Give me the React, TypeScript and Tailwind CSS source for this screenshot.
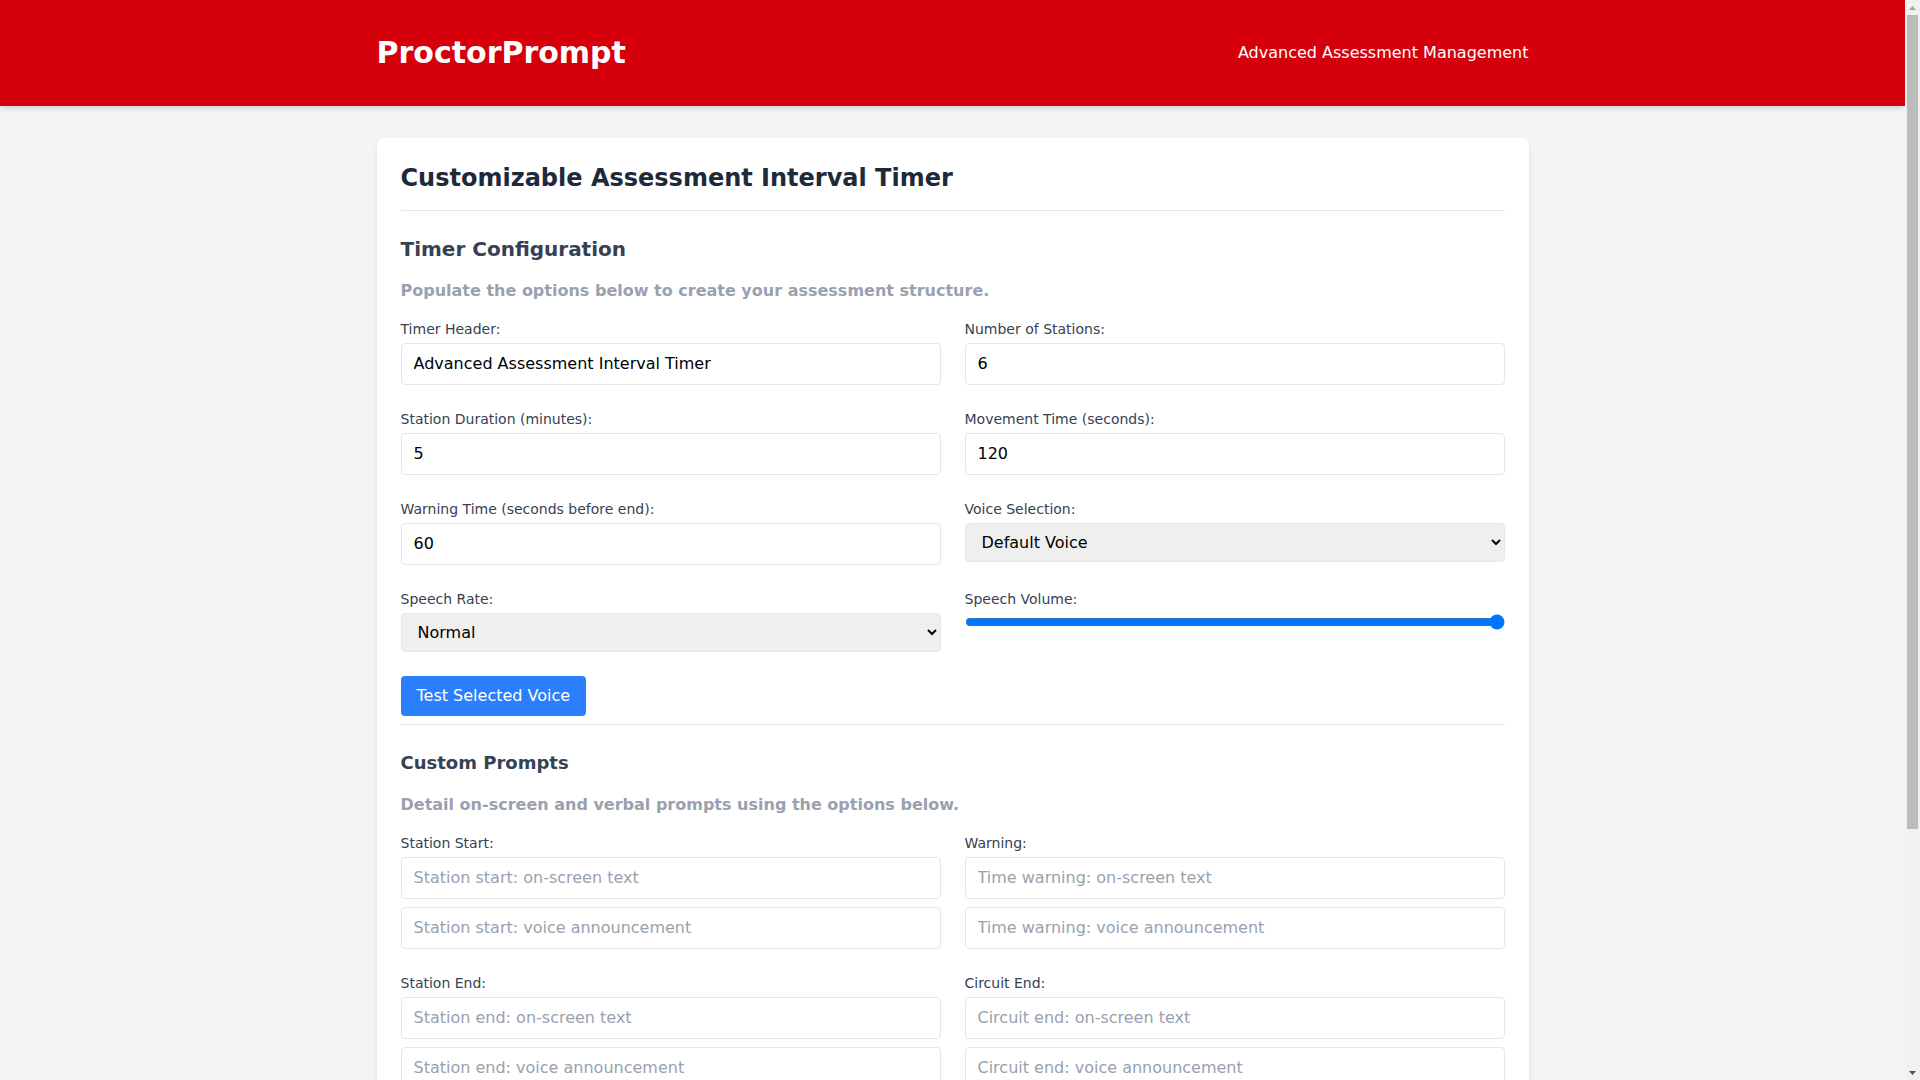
import { useState } from 'react'

const inputCls =
  'w-full px-3 py-2 border border-gray-200 rounded bg-white text-base text-black placeholder:text-gray-400 focus:outline-none focus:ring-2 focus:ring-blue-400'
const selectCls =
  'w-full h-[39px] px-3 border border-gray-200 rounded bg-[#efefef] text-base text-black focus:outline-none'
const labelCls = 'block text-sm text-gray-700 mb-1'

export default function App() {
  // timer config
  const [header, setHeader] = useState('Advanced Assessment Interval Timer')
  const [stations, setStations] = useState('6')
  const [duration, setDuration] = useState('5')
  const [movement, setMovement] = useState('120')
  const [warning, setWarning] = useState('60')
  const [voice, setVoice] = useState('default')
  const [rate, setRate] = useState('1')
  const [volume, setVolume] = useState('1')

  const prompts = [
    { label: 'Station Start:', a: 'Station start: on-screen text', b: 'Station start: voice announcement' },
    { label: 'Warning:', a: 'Time warning: on-screen text', b: 'Time warning: voice announcement' },
    { label: 'Station End:', a: 'Station end: on-screen text', b: 'Station end: voice announcement' },
    { label: 'Circuit End:', a: 'Circuit end: on-screen text', b: 'Circuit end: voice announcement' },
  ]

  return (
    <div className="h-screen flex bg-gray-100 font-['DejaVu_Sans',sans-serif]">
      <div className="flex-1 h-full overflow-y-auto [scrollbar-width:none]">
        {/* HEADER */}
        <header className="bg-[#d5000c] text-white shadow-md">
          <div className="max-w-6xl mx-auto h-[106px] flex items-center justify-between">
            <h1 className="text-3xl font-bold">ProctorPrompt</h1>
            <div className="text-base">Advanced Assessment Management</div>
          </div>
        </header>

        <main className="max-w-6xl mx-auto mt-8 pb-10">
          <div className="bg-white rounded-lg shadow-md p-6">
            <h2 className="text-2xl font-bold text-gray-800 pb-4 border-b border-gray-200 mb-6">
              Customizable Assessment Interval Timer
            </h2>

            {/* TIMER CONFIG */}
            <h3 className="text-xl font-bold text-gray-700 mb-4">Timer Configuration</h3>
            <p className="font-bold text-gray-400 mb-4">
              Populate the options below to create your assessment structure.
            </p>

            <div className="grid grid-cols-2 gap-6">
              <div>
                <label className={labelCls}>Timer Header:</label>
                <input className={inputCls} value={header} onChange={(e) => setHeader(e.target.value)} />
              </div>
              <div>
                <label className={labelCls}>Number of Stations:</label>
                <input className={inputCls} type="text" value={stations} onChange={(e) => setStations(e.target.value)} />
              </div>
              <div>
                <label className={labelCls}>Station Duration (minutes):</label>
                <input className={inputCls} type="text" value={duration} onChange={(e) => setDuration(e.target.value)} />
              </div>
              <div>
                <label className={labelCls}>Movement Time (seconds):</label>
                <input className={inputCls} type="text" value={movement} onChange={(e) => setMovement(e.target.value)} />
              </div>
              <div>
                <label className={labelCls}>Warning Time (seconds before end):</label>
                <input className={inputCls} type="text" value={warning} onChange={(e) => setWarning(e.target.value)} />
              </div>
              <div>
                <label className={labelCls}>Voice Selection:</label>
                <select className={selectCls} value={voice} onChange={(e) => setVoice(e.target.value)}>
                  <option value="default">Default Voice</option>
                </select>
              </div>
              <div>
                <label className={labelCls}>Speech Rate:</label>
                <select className={selectCls} value={rate} onChange={(e) => setRate(e.target.value)}>
                  <option value="0.75">Slow</option>
                  <option value="1">Normal</option>
                  <option value="1.25">Fast</option>
                </select>
              </div>
              <div>
                <label className={labelCls}>Speech Volume:</label>
                <input
                  type="range"
                  min="0"
                  max="1"
                  step="0.1"
                  value={volume}
                  onChange={(e) => setVolume(e.target.value)}
                  className="w-full"
                />
              </div>
            </div>

            <div className="mt-6 mb-2">
              <button className="bg-blue-500 text-white px-4 py-2 rounded hover:bg-blue-600">
                Test Selected Voice
              </button>
            </div>

            {/* CUSTOM PROMPTS */}
            <div className="border-t border-gray-200 pt-6">
              <h3 className="text-lg font-bold text-gray-700 mb-4">Custom Prompts</h3>
              <p className="font-bold text-gray-400 mb-4">
                Detail on-screen and verbal prompts using the options below.
              </p>

              <div className="grid grid-cols-2 gap-6">
                {prompts.map((p) => (
                  <div key={p.label}>
                    <label className={labelCls}>{p.label}</label>
                    <div className="space-y-2">
                      <input className={inputCls} placeholder={p.a} />
                      <input className={inputCls} placeholder={p.b} />
                    </div>
                  </div>
                ))}
              </div>
            </div>

            <div className="border-t border-gray-200 mt-6 pt-6 flex gap-3">
              <button className="bg-[#d5000c] text-white px-6 py-2 rounded">Start Timer</button>
              <button className="bg-gray-200 text-gray-800 px-6 py-2 rounded">Reset</button>
            </div>
          </div>
        </main>
      </div>

      {/* scrollbar */}
      <div className="w-[15px] h-full bg-[#f1f1f1] flex flex-col items-center">
        <div className="h-[15px] flex items-center justify-center">
          <svg width="7" height="4" viewBox="0 0 7 4">
            <path d="M3.5 0L7 4H0z" fill="#a3a3a3" />
          </svg>
        </div>
        <div className="w-[11px] h-[814px] bg-[#bcbcbc]" />
        <div className="flex-1" />
        <div className="h-[15px] flex items-center justify-center">
          <svg width="7" height="4" viewBox="0 0 7 4">
            <path d="M0 0H7L3.5 4z" fill="#505050" />
          </svg>
        </div>
      </div>
    </div>
  )
}
